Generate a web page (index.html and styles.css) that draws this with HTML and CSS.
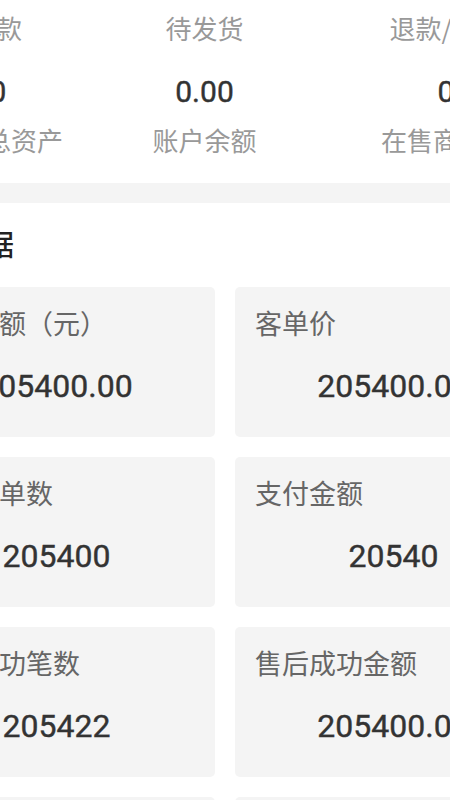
FILE: index.html
```html
<html>
    <head>
        <meta charset="UTF-8">
        <title>店铺数据</title>
        <meta name="viewport" content="width=device-width, initial-scale=1.0">
        <link rel="stylesheet" href="styles.css">
    </head>
    <body>
        <div class="page">
            <section class="overview">
                <div class="stat-row orders">
                    <div class="stat">
                        <div class="stat-value">0</div>
                        <div class="stat-label">待付款</div>
                    </div>
                    <div class="stat">
                        <div class="stat-value">0</div>
                        <div class="stat-label">待发货</div>
                    </div>
                    <div class="stat">
                        <div class="stat-value">0</div>
                        <div class="stat-label">退款/售后</div>
                    </div>
                </div>
                <div class="stat-row assets">
                    <div class="stat">
                        <div class="stat-value">0</div>
                        <div class="stat-label">店铺总资产</div>
                    </div>
                    <div class="stat">
                        <div class="stat-value">0.00</div>
                        <div class="stat-label">账户余额</div>
                    </div>
                    <div class="stat">
                        <div class="stat-value">0</div>
                        <div class="stat-label">在售商品数</div>
                    </div>
                </div>
            </section>

            <section class="core">
                <h2 class="core-title">核心数据</h2>
                <div class="card-grid">
                    <div class="card">
                        <div class="card-label">成交金额（元）</div>
                        <div class="card-value">205400.00</div>
                    </div>
                    <div class="card">
                        <div class="card-label">客单价</div>
                        <div class="card-value">205400.00</div>
                    </div>
                    <div class="card">
                        <div class="card-label">成交订单数</div>
                        <div class="card-value">205400</div>
                    </div>
                    <div class="card">
                        <div class="card-label">支付金额</div>
                        <div class="card-value">20540</div>
                    </div>
                    <div class="card">
                        <div class="card-label">售后成功笔数</div>
                        <div class="card-value">205422</div>
                    </div>
                    <div class="card">
                        <div class="card-label">售后成功金额</div>
                        <div class="card-value">205400.00</div>
                    </div>
                    <div class="card">
                        <div class="card-label">访客数</div>
                        <div class="card-value">2054</div>
                    </div>
                    <div class="card">
                        <div class="card-label">浏览量</div>
                        <div class="card-value">20540</div>
                    </div>
                </div>
            </section>
        </div>
    </body>
</html>
```

FILE: styles.css
```css
html {
    background-color: white;
}

body {
    margin: 0;
    overflow: hidden;
    font-family: "Noto Sans CJK SC", "Noto Sans", sans-serif;
}

.page {
    width: 706px;
    margin: -40px 0 0 -128px;
    display: flex;
    flex-direction: column;
    gap: 20px;
    background-color: #f4f4f4;
}

.overview,
.core {
    background-color: white;
}

.overview {
    display: flex;
    flex-direction: column;
    gap: 26px;
    padding-bottom: 25px;
}

.stat-row {
    display: grid;
}

.orders { grid-template-columns: 222px 221px 263px; }
.assets { grid-template-columns: 252px 161px 322px; }

.stat {
    display: flex;
    flex-direction: column;
    align-items: center;
    gap: 10px;
    white-space: nowrap;
}

/* digits are a bit heavier than Roboto regular in the design */
.stat-value,
.card-value {
    font-family: Roboto, "Noto Sans", sans-serif;
    color: #333;
    -webkit-text-stroke: 0.4px #333;
}

.stat-value {
    font-size: 30px;
    line-height: 40px;
}

.stat-label {
    font-size: 26px;
    line-height: 36px;
    color: #999;
}

.core {
    padding: 20px 26px;
}

.core-title {
    margin: 0 0 24px;
    font-size: 29px;
    font-weight: 500;
    line-height: 40px;
    color: #222;
}

.card-grid {
    display: grid;
    grid-template-columns: 1fr 1fr;
    gap: 20px;
}

.card {
    box-sizing: border-box;
    height: 150px;
    padding: 17px 20px 0;
    border-radius: 5px;
    background-color: #f4f4f4;
}

.card-label {
    font-size: 27px;
    line-height: 38px;
    color: #666;
    white-space: nowrap;
}

.card-value {
    margin-top: 24px;
    font-size: 32px;
    line-height: 40px;
    text-align: center;
}
```
